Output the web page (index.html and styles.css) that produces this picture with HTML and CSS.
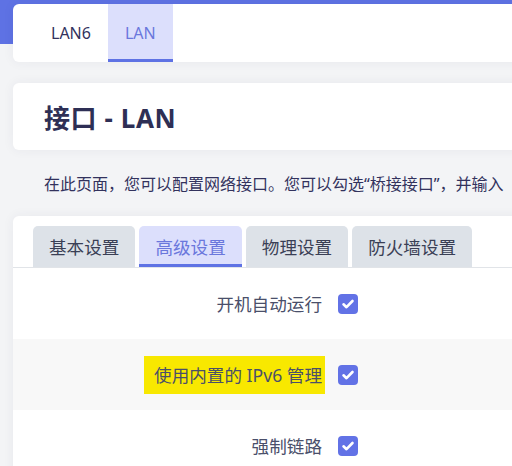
FILE: index.html
```html
<!DOCTYPE html>
<html lang="zh">
<head>
<meta charset="utf-8">
<link rel="stylesheet" href="styles.css">
</head>
<body>
<div class="page">
  <div class="card netbar">
    <div class="ntab">LAN6</div>
    <div class="ntab active">LAN</div>
  </div>
  <div class="card titlecard">
    <h2 class="title">接口 - LAN</h2>
  </div>
  <p class="desc">在此页面，您可以配置网络接口。您可以勾选“桥接接口”，并输入</p>
  <div class="card settings">
    <div class="stabs">
      <div class="stab">基本设置</div>
      <div class="stab active">高级设置</div>
      <div class="stab">物理设置</div>
      <div class="stab">防火墙设置</div>
    </div>
    <div class="row">
      <div class="label">开机自动运行</div>
      <div class="cb"><svg viewBox="0 0 20 20" width="20" height="20"><path d="M5.5 10.3l3 2.9 6-6.2" fill="none" stroke="#fff" stroke-width="2.6" stroke-linecap="round" stroke-linejoin="round"/></svg></div>
    </div>
    <div class="row alt">
      <div class="label"><span class="mark">使用内置的 IPv6 管理</span></div>
      <div class="cb"><svg viewBox="0 0 20 20" width="20" height="20"><path d="M5.5 10.3l3 2.9 6-6.2" fill="none" stroke="#fff" stroke-width="2.6" stroke-linecap="round" stroke-linejoin="round"/></svg></div>
    </div>
    <div class="row">
      <div class="label">强制链路</div>
      <div class="cb"><svg viewBox="0 0 20 20" width="20" height="20"><path d="M5.5 10.3l3 2.9 6-6.2" fill="none" stroke="#fff" stroke-width="2.6" stroke-linecap="round" stroke-linejoin="round"/></svg></div>
    </div>
  </div>
</div>
</body>
</html>
```
FILE: styles.css
```css
html, body {
  margin: 0;
  padding: 0;
}
body {
  width: 512px;
  height: 466px;
  overflow: hidden;
  background: linear-gradient(#5e72e4 0, #5e72e4 44px, #f3f4f6 44px);
  font-family: "Noto Sans", "Noto Sans CJK SC", sans-serif;
  color: #32325d;
}
.page {
  padding: 4px 0 0 13px;
  width: 620px;
}
.card {
  background: #fff;
  border-radius: 6px;
  box-shadow: 0 0 12px rgba(50, 50, 93, 0.06);
}
.netbar {
  display: flex;
  height: 58px;
  padding-left: 21px;
  overflow: hidden;
}
.ntab {
  display: flex;
  align-items: center;
  padding: 0 17px;
  font-size: 16px;
  color: #32325d;
  box-sizing: border-box;
}
.ntab.active {
  background: #dcdffc;
  color: #6a77dc;
  border-bottom: 3px solid #5e72e4;
  padding-top: 3px;
}
.titlecard {
  margin-top: 21px;
  height: 67px;
  display: flex;
  align-items: center;
  padding-left: 31px;
}
.title {
  margin: 0;
  font-size: 26px;
  font-weight: 700;
  color: #2e2f55;
  letter-spacing: 0.6px;
}
.desc {
  margin: 23px 0 21px 31px;
  font-size: 16px;
  line-height: 22px;
  white-space: nowrap;
  color: #32325d;
}
.settings {
  padding-top: 10px;
  border-radius: 6px 6px 0 0;
}
.stabs {
  display: flex;
  gap: 4px;
  padding-left: 20px;
  border-bottom: 1px solid #e1e4e8;
}
.stab {
  height: 41px;
  box-sizing: border-box;
  padding: 0 16px;
  display: flex;
  align-items: center;
  font-size: 17.6px;
  background: #dde2e8;
  border-radius: 5px 5px 0 0;
  color: #3a3f55;
}
.stab.active {
  background: #dcdffc;
  color: #6a77dc;
  border-bottom: 3px solid #5e72e4;
  padding-top: 3px;
}
.row {
  display: grid;
  grid-template-columns: 309px 20px;
  column-gap: 16px;
  align-items: center;
  height: 71px;
}
.row.alt {
  background: #f8f8f8;
}
.label {
  text-align: right;
  font-size: 17.6px;
  color: #4a4f6a;
}
.mark {
  background: #f8e800;
  padding: 7px 3px 7px 10px;
  margin-right: -3px;
}
.cb {
  width: 20px;
  height: 20px;
  border-radius: 4px;
  background: #6272e6;
  display: flex;
}
```
